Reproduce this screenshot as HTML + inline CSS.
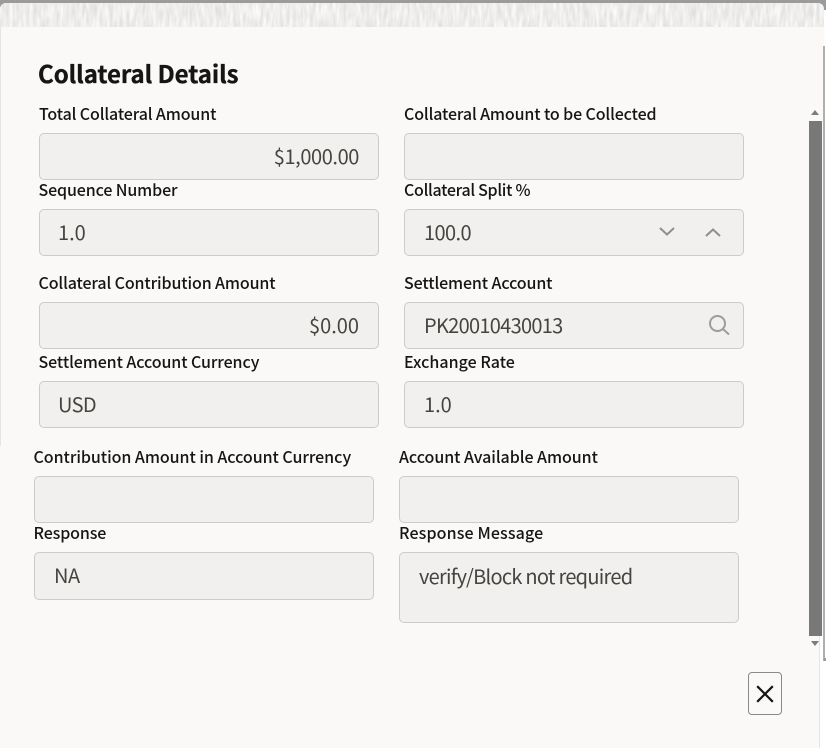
<!DOCTYPE html>
<html><head><meta charset="utf-8">
<style>
html,body{margin:0;padding:0;width:826px;height:748px;overflow:hidden;background:#fff;}
body{position:relative;font-family:"Liberation Sans","Noto Sans CJK JP",sans-serif;}
#bg{position:absolute;left:0;top:0;width:824px;height:748px;background:#faf9f8;}
#top{position:absolute;left:0;top:0;width:826px;height:10px;background:#9b9b9b;}
#strip{position:absolute;left:0;top:3px;width:824px;height:24px;border-radius:6px 6px 0 0;overflow:hidden;background:#f0efee;}
#strip svg{position:absolute;left:0;top:0;display:block;}
.l{position:absolute;white-space:nowrap;font-size:16px;line-height:20px;letter-spacing:-.12px;margin-top:-1px;color:#161513;font-family:"Noto Sans CJK JP","Liberation Sans",sans-serif;font-weight:500;}
.b{position:absolute;box-sizing:border-box;width:340px;background:#f1f0ef;border:1px solid #cccbc9;border-radius:5px;}
.v{position:absolute;white-space:nowrap;font-size:20px;line-height:26px;letter-spacing:-.65px;color:#47443f;font-family:"Noto Sans CJK JP","Liberation Sans",sans-serif;font-weight:400;}
h1{position:absolute;margin:0;left:38px;top:57px;font-size:24px;line-height:32px;font-weight:700;letter-spacing:-.05px;-webkit-text-stroke:.35px #161513;color:#161513;white-space:nowrap;font-family:"Noto Sans CJK JP","Liberation Sans",sans-serif;}
</style></head><body>
<div id="bg"></div>
<div id="top"></div>
<div id="strip"><svg width="824" height="24"><filter id="n" x="0" y="0" width="100%" height="100%" color-interpolation-filters="sRGB"><feTurbulence type="fractalNoise" baseFrequency="0.3 0.06" numOctaves="2" seed="4"/><feColorMatrix type="matrix" values="0.17 0 0 0 0.85  0.17 0 0 0 0.845  0.17 0 0 0 0.84  0 0 0 0 1"/></filter><rect width="824" height="24" filter="url(#n)"/></svg></div>
<div style="position:absolute;left:0;top:27px;width:1px;height:419px;background:#e6e5e3"></div>
<div style="position:absolute;left:820px;top:636px;width:3px;height:112px;background:#fff"></div>
<div style="position:absolute;left:824px;top:27px;width:2px;height:19px;background:#fdfdfd"></div>
<div style="position:absolute;left:823px;top:46px;width:2px;height:615px;background:#b0afad"></div>
<div style="position:absolute;left:824px;top:658px;width:2px;height:3px;background:#9b9b9b"></div>
<div style="position:absolute;left:824px;top:661px;width:2px;height:87px;background:#fff"></div>
<div style="position:absolute;left:823px;top:661px;width:1px;height:87px;background:#fff"></div>
<div style="position:absolute;left:819px;top:636px;width:1px;height:112px;background:#e6e5e3"></div>

<h1>Collateral Details</h1>

<div class="l" style="left:39px;top:104px">Total Collateral Amount</div>
<div class="l" style="left:404px;top:104px">Collateral Amount to be Collected</div>
<div class="b" style="left:39px;top:133px;height:47px"></div>
<div class="b" style="left:404px;top:133px;height:47px"></div>
<div class="v" style="right:467px;top:143px;letter-spacing:-.4px">$1,000.00</div>

<div class="l" style="left:38.500px;top:180px">Sequence Number</div>
<div class="l" style="left:404px;top:180px;letter-spacing:-.3px">Collateral Split %</div>
<div class="b" style="left:39px;top:209px;height:47px"></div>
<div class="b" style="left:404px;top:209px;height:47px"></div>
<div class="v" style="left:58px;top:219px;letter-spacing:0">1.0</div>
<div class="v" style="left:424px;top:219px;letter-spacing:-.6px">100.0</div>
<svg style="position:absolute;left:658px;top:225px" width="64" height="14" fill="none" stroke="#8f8e8c" stroke-width="2"><path d="M2 3l7 6.500 7-6.500"/><path d="M48 11l7-6.500 7 6.500"/></svg>

<div class="l" style="left:38.500px;top:273px">Collateral Contribution Amount</div>
<div class="l" style="left:404px;top:273px">Settlement Account</div>
<div class="b" style="left:39px;top:302px;height:47px"></div>
<div class="b" style="left:404px;top:302px;height:47px"></div>
<div class="v" style="right:467px;top:312px;letter-spacing:0">$0.00</div>
<div class="v" style="left:424px;top:312px;letter-spacing:-.7px">PK20010430013</div>
<svg style="position:absolute;left:708px;top:314px" width="24" height="24" fill="none" stroke="#9d9c9a" stroke-width="2"><circle cx="9.500" cy="9.500" r="7.500"/><path d="M15 15l6 5.500"/></svg>

<div class="l" style="left:38.500px;top:352px;letter-spacing:-.09px">Settlement Account Currency</div>
<div class="l" style="left:404px;top:352px;letter-spacing:.03px">Exchange Rate</div>
<div class="b" style="left:39px;top:381px;height:47px"></div>
<div class="b" style="left:404px;top:381px;height:47px"></div>
<div class="v" style="left:58px;top:391px;letter-spacing:-.6px">USD</div>
<div class="v" style="left:424px;top:391px;letter-spacing:0">1.0</div>

<div class="l" style="left:33.500px;top:447px;letter-spacing:-.045px">Contribution Amount in Account Currency</div>
<div class="l" style="left:399px;top:447px;letter-spacing:-.04px">Account Available Amount</div>
<div class="b" style="left:34px;top:476px;height:47px"></div>
<div class="b" style="left:399px;top:476px;height:47px"></div>

<div class="l" style="left:33.500px;top:523px">Response</div>
<div class="l" style="left:399px;top:523px;letter-spacing:.13px">Response Message</div>
<div class="b" style="left:34px;top:552px;height:48px"></div>
<div class="b" style="left:399px;top:552px;height:71px"></div>
<div class="v" style="left:54px;top:562px;letter-spacing:-.4px">NA</div>
<div class="v" style="left:419px;top:563px;letter-spacing:-.72px">verify/Block not required</div>

<div style="position:absolute;left:809px;top:121px;width:13px;height:515px;background:#787878"></div>
<svg style="position:absolute;left:811px;top:110px" width="8" height="6"><path d="M0 5h8L4 0z" fill="#7c7c7c"/></svg>
<svg style="position:absolute;left:811px;top:641px" width="8" height="6"><path d="M0 0h8L4 5z" fill="#7c7c7c"/></svg>

<div style="position:absolute;box-sizing:border-box;left:748px;top:672px;width:34px;height:43px;border:1px solid #8a8987;border-radius:4px"></div>
<svg style="position:absolute;left:755px;top:684px" width="20" height="20" fill="none" stroke="#161513" stroke-width="2.200"><path d="M2.200 2.200l15.600 15.600M17.800 2.200l-15.600 15.600"/></svg>
</body></html>
